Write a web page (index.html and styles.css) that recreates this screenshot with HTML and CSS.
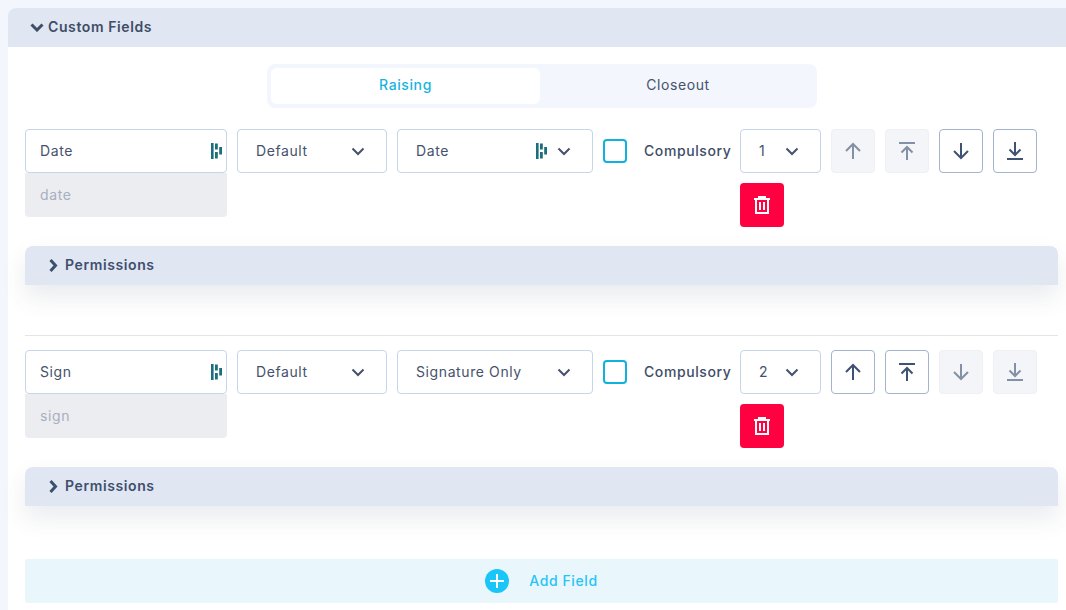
FILE: index.html
```html
<!DOCTYPE html>
<html lang="en">
<head>
    <meta charset="UTF-8">
    <title>Custom Fields</title>
    <link rel="stylesheet" href="styles.css">
</head>
<body>
    <svg class="defs" width="0" height="0">
        <symbol id="grip" viewBox="0 0 11 16">
            <rect x="0" y="0" width="2.600" height="16" fill="#1b6f7c"/>
            <rect x="4" y="0.500" width="2.800" height="6" fill="#1b6f7c"/>
            <rect x="4" y="9" width="2.800" height="6.500" fill="#1b6f7c"/>
            <rect x="8.200" y="4" width="2.800" height="7.500" fill="#1b6f7c"/>
        </symbol>
        <symbol id="chev" viewBox="0 0 14 9">
            <path d="M1.500 1.500l5.500 5.500 5.500-5.500" fill="none" stroke="currentColor" stroke-width="2"/>
        </symbol>
        <symbol id="chev-down-bold" viewBox="0 0 14 9">
            <path d="M1.500 1.500l5.500 5.500 5.500-5.500" fill="none" stroke="currentColor" stroke-width="3"/>
        </symbol>
        <symbol id="chev-right-bold" viewBox="0 0 9 13">
            <path d="M1.500 1l5 5.500-5 5.500" fill="none" stroke="currentColor" stroke-width="3"/>
        </symbol>
        <symbol id="up" viewBox="0 0 18 18">
            <path d="M9 17V2M2 9l7-7 7 7" fill="none" stroke="currentColor" stroke-width="2"/>
        </symbol>
        <symbol id="top" viewBox="0 0 18 18">
            <path d="M1 1h16M9 18V5M3.500 10.500L9 5l5.500 5.500" fill="none" stroke="currentColor" stroke-width="2"/>
        </symbol>
        <symbol id="down" viewBox="0 0 18 18">
            <path d="M9 1v15M2 9l7 7 7-7" fill="none" stroke="currentColor" stroke-width="2"/>
        </symbol>
        <symbol id="bottom" viewBox="0 0 18 18">
            <path d="M1 17h16M9 0v13M3.500 7.500L9 13l5.500-5.500" fill="none" stroke="currentColor" stroke-width="2"/>
        </symbol>
        <symbol id="trash" viewBox="0 0 16 18">
            <path d="M0 3h16M5 3V1h6v2M2 3v14h12V3M6 6v8M10 6v8" fill="none" stroke="currentColor" stroke-width="2"/>
        </symbol>
    </svg>

    <div class="panel">
        <div class="panel-head">
            <svg class="head-chev"><use href="#chev-down-bold"/></svg>
            <span>Custom Fields</span>
        </div>
        <div class="panel-body">
            <div class="tabs">
                <div class="tab active"><span>Raising</span></div>
                <div class="tab"><span>Closeout</span></div>
            </div>

            <div class="field">
                <div class="field-row">
                    <div class="name-col">
                        <div class="box name-box"><span>Date</span><svg class="grip"><use href="#grip"/></svg></div>
                        <div class="key-box"><span>date</span></div>
                    </div>
                    <div class="box select w-150"><span>Default</span><svg class="chev"><use href="#chev"/></svg></div>
                    <div class="box select w-196">
                        <span class="grow">Date</span>
                        <svg class="grip grip-mid"><use href="#grip"/></svg>
                        <svg class="chev"><use href="#chev"/></svg>
                    </div>
                    <div class="check"></div>
                    <div class="check-label">Compulsory</div>
                    <div class="order-col">
                        <div class="box select w-81"><span>1</span><svg class="chev"><use href="#chev"/></svg></div>
                        <div class="move off"><svg><use href="#up"/></svg></div>
                        <div class="move off"><svg><use href="#top"/></svg></div>
                        <div class="move"><svg><use href="#down"/></svg></div>
                        <div class="move"><svg><use href="#bottom"/></svg></div>
                        <div class="delete"><svg><use href="#trash"/></svg></div>
                    </div>
                </div>
                <div class="perm">
                    <svg class="perm-chev"><use href="#chev-right-bold"/></svg>
                    <span>Permissions</span>
                </div>
            </div>

            <hr class="divider">

            <div class="field">
                <div class="field-row">
                    <div class="name-col">
                        <div class="box name-box"><span>Sign</span><svg class="grip"><use href="#grip"/></svg></div>
                        <div class="key-box"><span>sign</span></div>
                    </div>
                    <div class="box select w-150"><span>Default</span><svg class="chev"><use href="#chev"/></svg></div>
                    <div class="box select w-196"><span class="grow">Signature Only</span><svg class="chev"><use href="#chev"/></svg></div>
                    <div class="check"></div>
                    <div class="check-label">Compulsory</div>
                    <div class="order-col">
                        <div class="box select w-81"><span>2</span><svg class="chev"><use href="#chev"/></svg></div>
                        <div class="move"><svg><use href="#up"/></svg></div>
                        <div class="move"><svg><use href="#top"/></svg></div>
                        <div class="move off"><svg><use href="#down"/></svg></div>
                        <div class="move off"><svg><use href="#bottom"/></svg></div>
                        <div class="delete"><svg><use href="#trash"/></svg></div>
                    </div>
                </div>
                <div class="perm">
                    <svg class="perm-chev"><use href="#chev-right-bold"/></svg>
                    <span>Permissions</span>
                </div>
            </div>

            <div class="add-field">
                <div class="add-icon"></div>
                <span>Add Field</span>
            </div>
        </div>
    </div>
</body>
</html>
```

FILE: styles.css
```css
*{
    box-sizing: border-box;
}
html,body{
    height: 100%;
}
body{
    margin: 0;
    padding: 8px 0 0 8px;
    background: #f3f6fd;
    font-family: "Inter", "Liberation Sans", sans-serif;
    font-size: 14px;
    letter-spacing: 0.6px;
    color: #45526c;
    overflow: hidden;
}
.defs{
    position: absolute;
}
.panel{
    background: #fff;
    border-radius: 8px 0 0 0;
    height: 100%;
}
.panel-head{
    height: 39px;
    display: flex;
    align-items: center;
    padding-left: 22px;
    background: #e0e6f2;
    border-radius: 8px 0 0 0;
    font-weight: 600;
    color: #3f4d67;
}
.panel-head span,.key-box span,.perm span,.add-field span{
    margin-bottom: 2px;
}
.tab span{
    margin-bottom: 4px;
}
.box span{
    margin-bottom: 1px;
}
.head-chev{
    width: 14px;
    height: 9px;
    margin-right: 4px;
}
.panel-body{
    padding: 17px 8px 0 17px;
}
.tabs{
    display: flex;
    width: 550px;
    height: 44px;
    margin: 0 0 21px 242px;
    padding: 4px;
    background: #f3f6fd;
    border-radius: 8px;
}
.tab{
    width: 269px;
    flex: none;
    display: flex;
    align-items: center;
    justify-content: center;
    border-radius: 6px;
}
.tab + .tab{
    width: 273px;
    padding-left: 3px;
}
.tab.active{
    background: #fff;
    color: #18b4e0;
    font-weight: 500;
}
.field-row{
    display: flex;
    align-items: flex-start;
    gap: 10px;
}
.field-row > *{
    flex: none;
}
.box{
    height: 44px;
    display: flex;
    align-items: center;
    background: #fff;
    border: 1px solid #c5d5ea;
    border-radius: 4px;
}
.name-col{
    width: 202px;
}
.name-box{
    justify-content: space-between;
    padding: 0 4px 0 14px;
}
.key-box{
    height: 44px;
    display: flex;
    align-items: center;
    padding-left: 15px;
    background: #ecedf1;
    border-radius: 0 0 4px 4px;
    color: #a8afbf;
}
.grip{
    width: 11px;
    height: 16px;
}
.grip-mid{
    margin-right: 10px;
}
.select{
    padding: 0 21px 0 18px;
    justify-content: space-between;
}
.grow{
    flex: 1;
}
.w-150{
    width: 150px;
}
.w-196{
    width: 196px;
}
.w-81{
    width: 81px;
}
.chev{
    width: 14px;
    height: 9px;
}
.check{
    width: 24px;
    height: 24px;
    margin-top: 10px;
    border: 2px solid #0fb2dc;
    border-radius: 4px;
}
.check-label{
    width: 87px;
    margin-left: 7px;
    line-height: 44px;
    font-weight: 500;
    white-space: nowrap;
    color: #3f4d67;
}
.order-col{
    width: 318px;
    margin-left: -1px;
    display: flex;
    flex-wrap: wrap;
    gap: 10px;
}
.move{
    width: 44px;
    height: 44px;
    display: flex;
    align-items: center;
    justify-content: center;
    border: 1px solid #a3b3cc;
    border-radius: 4px;
    color: #3f5272;
}
.move svg{
    width: 18px;
    height: 18px;
}
.move.off{
    background: #f3f5f8;
    border-color: #eef0f4;
    color: #8490a6;
}
.delete{
    width: 44px;
    height: 44px;
    display: flex;
    align-items: center;
    justify-content: center;
    background: #ff0040;
    border-radius: 4px;
    color: #fff;
}
.delete svg{
    width: 16px;
    height: 18px;
}
.perm{
    height: 39px;
    margin-top: 19px;
    display: flex;
    align-items: center;
    padding-left: 24px;
    background: #e0e6f2;
    border-radius: 8px 8px 0 0;
    box-shadow: 0 12px 24px rgba(60, 70, 100, 0.11);
    font-weight: 600;
    color: #3d4f6e;
}
.perm-chev{
    width: 9px;
    height: 13px;
    margin-right: 7px;
}
.divider{
    height: 1px;
    margin: 50px 0 14px;
    border: 0;
    background: #e3e5ea;
}
.add-field{
    height: 44px;
    margin-top: 53px;
    display: flex;
    align-items: center;
    justify-content: center;
    gap: 20px;
    background: #e9f7fc;
    border-radius: 2px;
    color: #27c4f5;
    font-weight: 500;
}
.add-icon{
    width: 24px;
    height: 24px;
    position: relative;
    border-radius: 50%;
    background: #1ac6f7;
}
.add-icon::before,.add-icon::after{
    content: "";
    position: absolute;
    background: #fff;
}
.add-icon::before{
    left: 5px;
    right: 5px;
    top: 11px;
    height: 2px;
}
.add-icon::after{
    top: 5px;
    bottom: 5px;
    left: 11px;
    width: 2px;
}
```
